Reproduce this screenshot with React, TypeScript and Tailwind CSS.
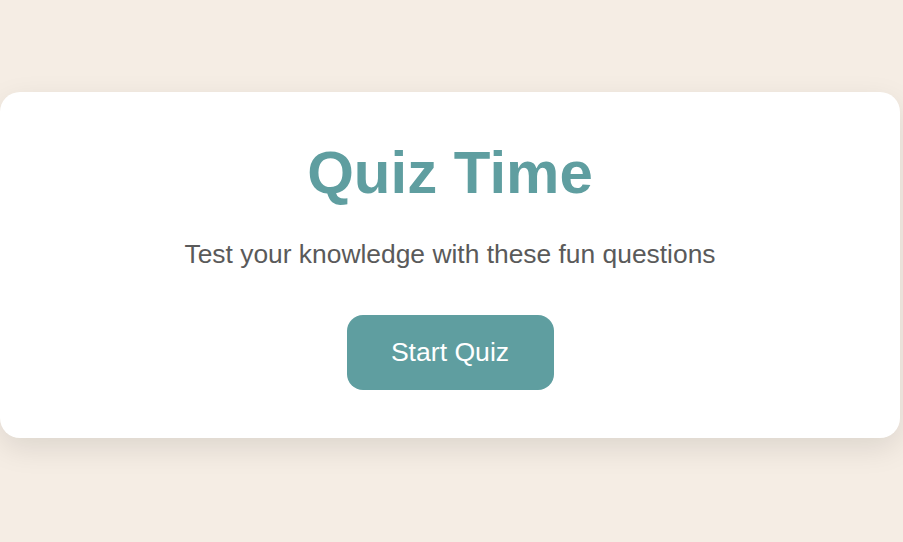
export default function App() {
  return (
    <div className="min-h-screen bg-[#f5ede4] pt-[92px] font-['Liberation_Sans',Arial,sans-serif]">
      <div className="w-[900px] rounded-[20px] bg-white pt-[45px] pb-[48px] text-center shadow-[0_10px_30px_rgba(0,0,0,0.1)]">
        <h1 className="text-[60px] leading-[72px] font-bold text-[#5f9ea0]">Quiz Time</h1>
        <p className="mt-[26px] text-[26.4px] leading-[38px] text-[#5a5a5a]">
          Test your knowledge with these fun questions
        </p>
        <button className="mt-[42px] inline-flex h-[75px] w-[207px] items-center justify-center rounded-[16px] bg-[#5f9ea0] text-[26.6px] text-white">
          Start Quiz
        </button>
      </div>
    </div>
  )
}
